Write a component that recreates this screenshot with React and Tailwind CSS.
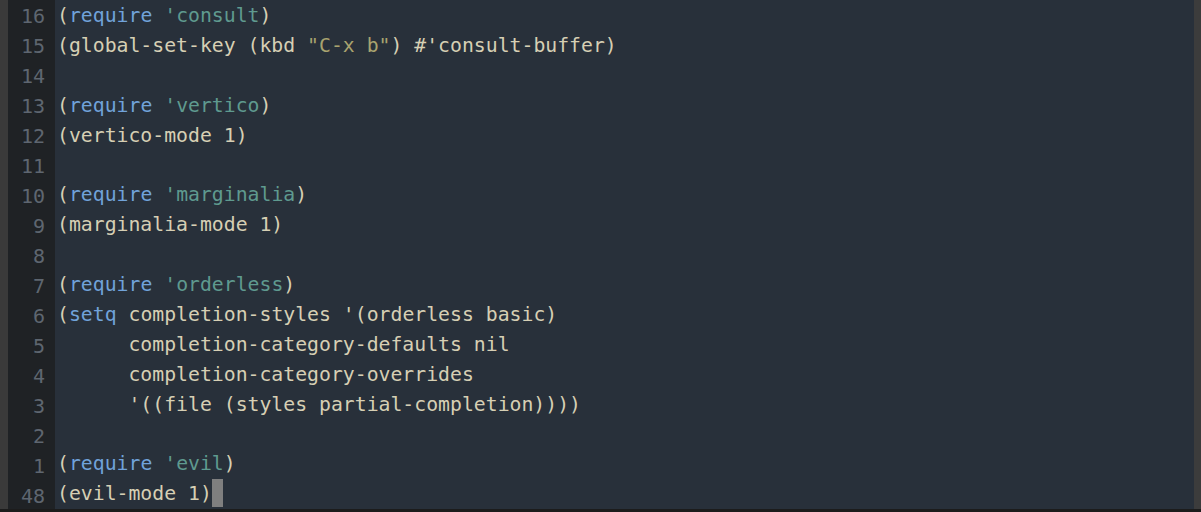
import React from "react";

// one entry per visible line: [relative line number, tokens]
const lines = [
  ["16", [["(", "t"], ["require", "k"], [" ", "t"], ["'consult", "c"], [")", "t"]]],
  ["15", [["(global-set-key (kbd ", "t"], ["\"C-x b\"", "s"], [") #'consult-buffer)", "t"]]],
  ["14", []],
  ["13", [["(", "t"], ["require", "k"], [" ", "t"], ["'vertico", "c"], [")", "t"]]],
  ["12", [["(vertico-mode 1)", "t"]]],
  ["11", []],
  ["10", [["(", "t"], ["require", "k"], [" ", "t"], ["'marginalia", "c"], [")", "t"]]],
  ["9", [["(marginalia-mode 1)", "t"]]],
  ["8", []],
  ["7", [["(", "t"], ["require", "k"], [" ", "t"], ["'orderless", "c"], [")", "t"]]],
  ["6", [["(", "t"], ["setq", "k"], [" completion-styles '(orderless basic)", "t"]]],
  ["5", [["      completion-category-defaults nil", "t"]]],
  ["4", [["      completion-category-overrides", "t"]]],
  ["3", [["      '((file (styles partial-completion))))", "t"]]],
  ["2", []],
  ["1", [["(", "t"], ["require", "k"], [" ", "t"], ["'evil", "c"], [")", "t"]]],
  ["48", [["(evil-mode 1)", "t"]], true],
];

const tokenClass = {
  t: "text-[#d6cfb4]",
  k: "text-[#71a3da]",
  c: "text-[#5f9a8f]",
  s: "text-[#a9a36f]",
};

const App = () => {
  return (
    <div
      className="w-[1201px] h-[512px] flex flex-col bg-[#1c1c1c] overflow-hidden"
      style={{ fontFamily: '"DejaVu Sans Mono", "Liberation Mono", monospace' }}
    >
      <div className="flex flex-1 min-h-0">
        <div className="w-[8px] bg-[#3a3a3a]" />
        <div className="w-[47px] bg-[#1f2225] flex flex-col pt-[1px]">
          {lines.map(([num], i) => (
            <div
              key={i}
              className="h-[30px] leading-[30px] text-[20px] text-right pr-[10px] text-[#5e6670] whitespace-pre"
            >
              {num}
            </div>
          ))}
        </div>
        <div className="flex-1 bg-[#28303a] flex flex-col pl-[2px] pt-[1px]">
          {lines.map(([num, tokens, current], i) => (
            <div
              key={i}
              className="h-[30px] leading-[30px] text-[19.8px] whitespace-pre flex"
            >
              {tokens.map(([text, kind], j) => (
                <span key={j} className={tokenClass[kind]}>
                  {text}
                </span>
              ))}
              {current && (
                <span className="inline-block w-[11px] h-[28px] bg-[#7f7f7f]" />
              )}
            </div>
          ))}
        </div>
        <div className="w-[7px] bg-[#3c3c3c]" />
      </div>
      <div className="h-[3px] bg-[#1c1c1c]" />
    </div>
  );
};

export default App;
